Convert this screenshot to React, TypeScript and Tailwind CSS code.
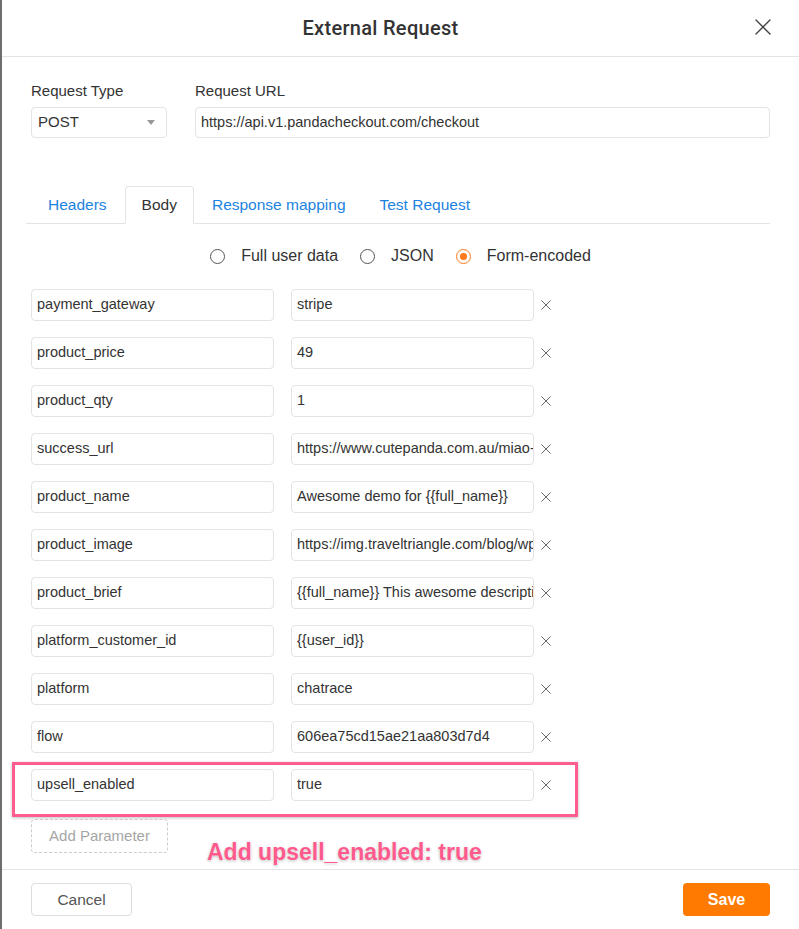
const params = [
  { key: "payment_gateway", value: "stripe" },
  { key: "product_price", value: "49" },
  { key: "product_qty", value: "1" },
  { key: "success_url", value: "https://www.cutepanda.com.au/miao-success" },
  { key: "product_name", value: "Awesome demo for {{full_name}}" },
  { key: "product_image", value: "https://img.traveltriangle.com/blog/wp-content" },
  { key: "product_brief", value: "{{full_name}} This awesome description" },
  { key: "platform_customer_id", value: "{{user_id}}" },
  { key: "platform", value: "chatrace" },
  { key: "flow", value: "606ea75cd15ae21aa803d7d4" },
  { key: "upsell_enabled", value: "true" },
];

function XIcon({ size, stroke, width }: { size: number; stroke: string; width: number }) {
  return (
    <svg width={size} height={size} viewBox="0 0 16 16" fill="none">
      <path d="M1 1L15 15M15 1L1 15" stroke={stroke} strokeWidth={width} strokeLinecap="round" />
    </svg>
  );
}

function Field({ text, className = "" }: { text: string; className?: string }) {
  return (
    <div
      className={`h-[32px] border border-[#e3e3e3] rounded-[4px] bg-white px-[5px] flex items-center text-[14.5px] text-[#333] whitespace-nowrap overflow-hidden ${className}`}
    >
      {text}
    </div>
  );
}

function Radio({ label, checked }: { label: string; checked?: boolean }) {
  return (
    <label className="flex items-center gap-[16px]">
      <span
        className={`w-[15px] h-[15px] rounded-full border-[1.5px] flex items-center justify-center ${
          checked ? "border-[#ff7a1a]" : "border-[#555]"
        }`}
      >
        {checked && <span className="w-[7px] h-[7px] rounded-full bg-[#ff7a1a]" />}
      </span>
      <span className="text-[16px] text-[#333]">{label}</span>
    </label>
  );
}

export default function App() {
  return (
    <div className="w-full h-[929px] bg-[#6e6e6e] flex font-['Liberation_Sans',Arial,sans-serif]">
      <div className="ml-[2px] flex-1 bg-white flex flex-col">
        {/* Header */}
        <div className="relative h-[57px] border-b border-[#e4e4e4] flex items-center justify-center pr-[40px]">
          <h2 className="text-[20px] font-medium tracking-[0.3px] text-[#333] font-['Roboto',sans-serif]">External Request</h2>
          <button className="absolute right-[28px] top-[19px]">
            <XIcon size={16} stroke="#444" width={1.4} />
          </button>
        </div>

        {/* Body */}
        <div className="flex-1 px-[29px] pt-[25px]">
          <div className="flex gap-[28px]">
            <div className="flex flex-col gap-[7px]">
              <span className="text-[15px] text-[#333] leading-[18px]">Request Type</span>
              <div className="w-[136px] h-[31px] border border-[#e3e3e3] rounded-[4px] flex items-center justify-between px-[6px] text-[15px] text-[#333]">
                POST
                <span className="w-0 h-0 border-l-[4px] border-r-[4px] border-t-[5px] border-l-transparent border-r-transparent border-t-[#999] mr-[5px]" />
              </div>
            </div>
            <div className="flex-1 flex flex-col gap-[7px]">
              <span className="text-[15px] text-[#333] leading-[18px]">Request URL</span>
              <div className="h-[31px] border border-[#e3e3e3] rounded-[4px] flex items-center px-[5px] text-[14.5px] text-[#333]">
                https://api.v1.pandacheckout.com/checkout
              </div>
            </div>
          </div>

          {/* Tabs */}
          <div className="mt-[48px] ml-[-5px] flex border-b border-[#e4e4e4] pl-[6px] gap-[2px] h-[38px]">
            <span className="px-[16px] flex items-center text-[15.5px] text-[#1c83e0]">Headers</span>
            <span className="px-[16px] flex items-center text-[15.5px] text-[#333] border border-[#e4e4e4] border-b-white rounded-t-[4px] mb-[-1px] bg-white">
              Body
            </span>
            <span className="px-[16px] flex items-center text-[15.5px] text-[#1c83e0]">Response mapping</span>
            <span className="px-[16px] flex items-center text-[15.5px] text-[#1c83e0]">Test Request</span>
          </div>

          {/* Body type */}
          <div className="mt-[20px] flex justify-center gap-[22px]">
            <Radio label="Full user data" />
            <Radio label="JSON" />
            <Radio label="Form-encoded" checked />
          </div>

          {/* Parameters */}
          <div className="mt-[21px] flex flex-col gap-[16px]">
            {params.map((p, i) => (
              <div key={p.key} className="relative flex items-center">
                {i === params.length - 1 && (
                  <div className="absolute left-[-19px] top-[-7px] w-[566px] h-[55px] border-[3px] border-[#ff5c8f] shadow-[0_1px_3px_rgba(0,0,0,0.25)]" />
                )}
                <Field text={p.key} className="w-[243px]" />
                <Field text={p.value} className="w-[243px] ml-[17px]" />
                <button className="ml-[7px] text-[#666]">
                  <XIcon size={10} stroke="#666" width={1.6} />
                </button>
              </div>
            ))}
          </div>

          <div className="relative mt-[18px]">
            <button className="w-[137px] h-[34px] border border-dashed border-[#ccc] rounded-[4px] text-[15px] text-[#a5a5a5]">
              Add Parameter
            </button>
            <span className="absolute left-[176px] top-[19px] text-[23px] leading-[28px] font-bold text-[#ff5a8c] [text-shadow:0_0_2px_#fff,0_1px_3px_rgba(0,0,0,0.3)]">
              Add upsell_enabled: true
            </span>
          </div>
        </div>

        {/* Footer */}
        <div className="h-[60px] border-t border-[#e4e4e4] px-[29px] flex items-center justify-between">
          <button className="w-[101px] h-[33px] border border-[#ddd] rounded-[4px] text-[15.5px] text-[#555]">Cancel</button>
          <button className="w-[87px] h-[33px] rounded-[4px] bg-[#ff7a00] text-[16px] font-bold text-white">Save</button>
        </div>
      </div>
    </div>
  );
}
